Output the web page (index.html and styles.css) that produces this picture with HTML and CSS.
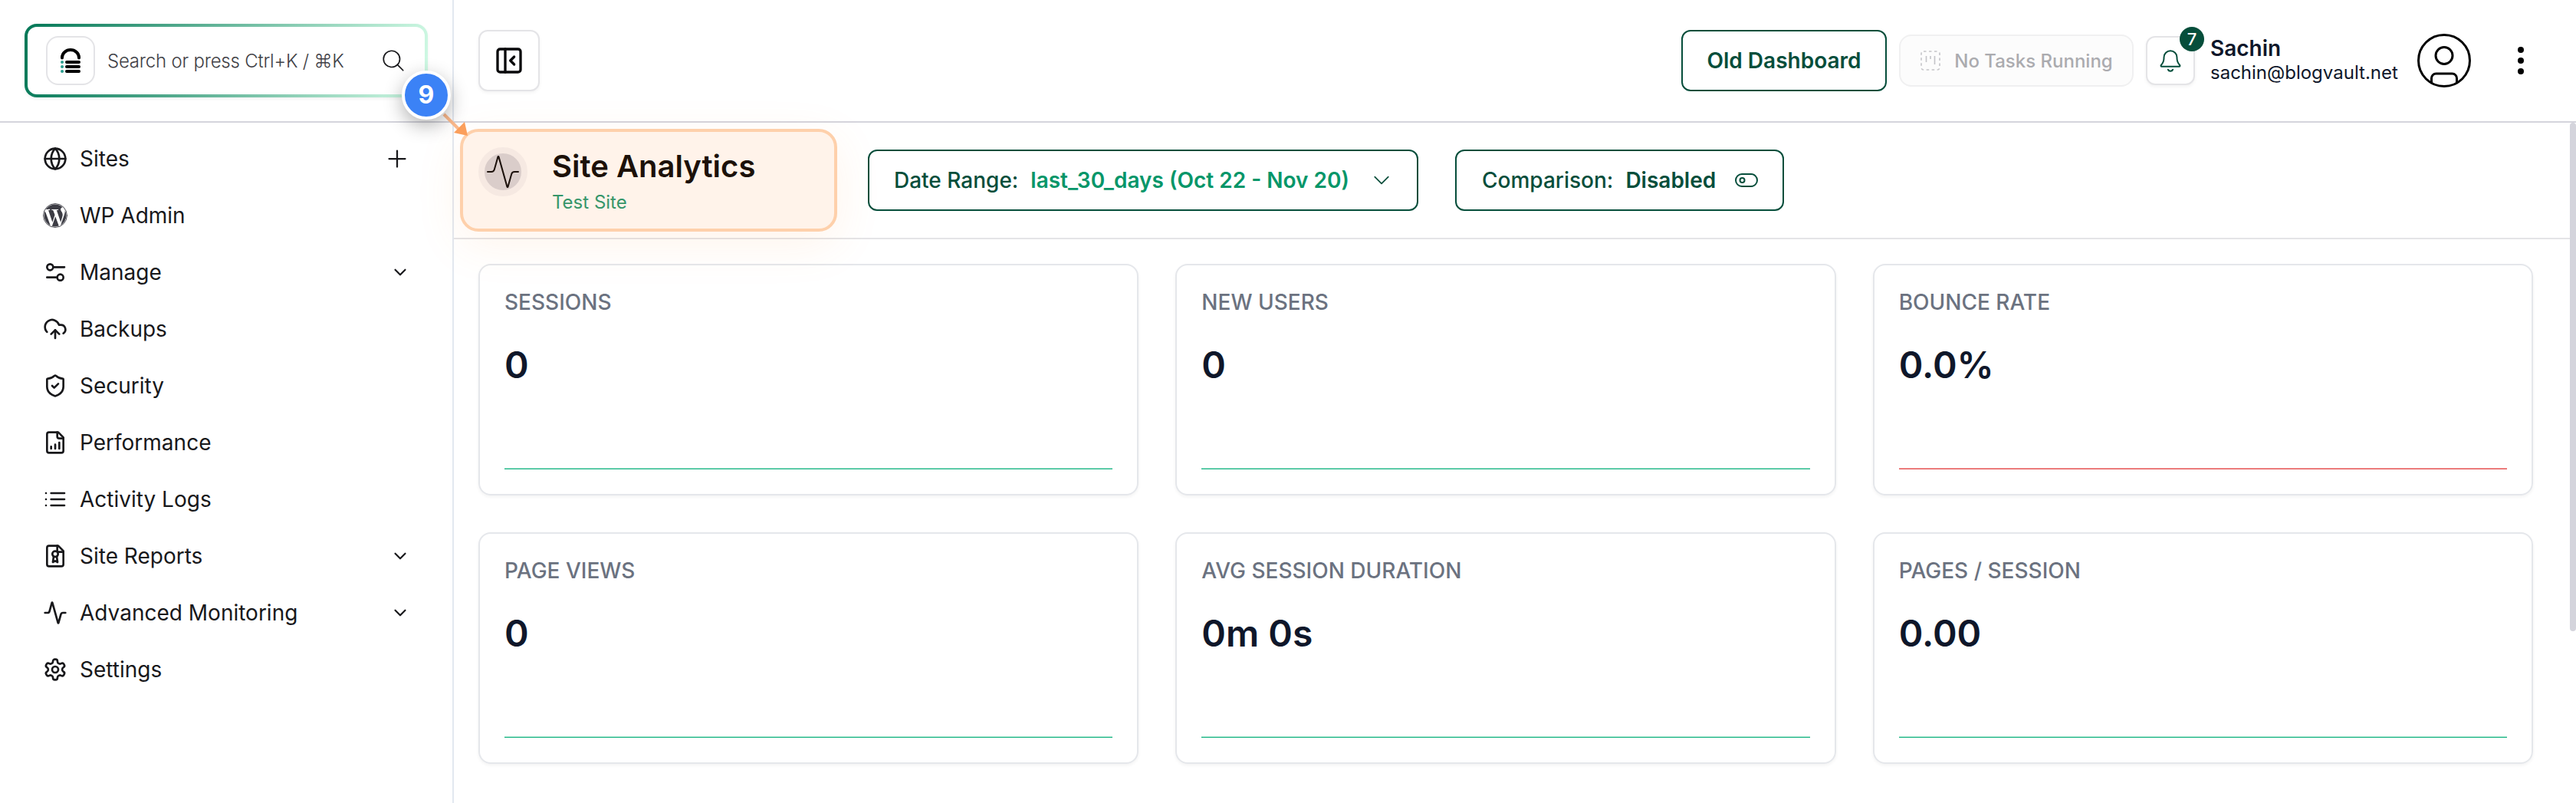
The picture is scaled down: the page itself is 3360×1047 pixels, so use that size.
FILE: index.html
```html
<!DOCTYPE html>
<html lang="en">
<head>
    <meta charset="UTF-8">
    <meta name="viewport" content="width=device-width, initial-scale=1.0">
    <title>Site Analytics</title>
    <link rel="stylesheet" href="styles.css">
</head>
<body>
<div class="app">
    <aside class="sidebar">
        <div class="search-area">
            <div class="search">
                <span class="logo">
                    <svg width="26" height="32" viewBox="0 0 26 32">
                        <path d="M2 12.500V12a11 10 0 0 1 22 0v.5" stroke="#000" stroke-width="4"/>
                        <path d="M8 18h16M8 24h16M8 30h16" stroke="#000" stroke-width="4"/>
                        <path d="M2 18h.1M2 24h.1M2 30h.1" stroke="#2a9d8f" stroke-width="4"/>
                    </svg>
                </span>
                <span class="search-text">Search or press Ctrl+K / ⌘K</span>
                <svg class="search-icon" viewBox="0 0 24 24"><circle cx="10.500" cy="10.500" r="7.500"/><path d="m21 21-5.200-5.200"/></svg>
            </div>
        </div>
        <nav class="menu">
            <a class="item">
                <svg class="icon" viewBox="0 0 24 24"><circle cx="12" cy="12" r="10"/><path d="M12 2a14.500 14.500 0 0 0 0 20 14.500 14.500 0 0 0 0-20M2 12h20"/></svg>
                <span>Sites</span>
                <svg class="plus" viewBox="0 0 24 24"><path d="M5 12h14M12 5v14"/></svg>
            </a>
            <a class="item">
                <svg class="icon wp" viewBox="0 0 24 24"><circle cx="12" cy="12" r="11.600"/><path d="M21.469 6.825c.84 1.537 1.318 3.300 1.318 5.175 0 3.979-2.156 7.456-5.363 9.325l3.295-9.527c.615-1.540.82-2.771.82-3.864 0-.405-.026-.78-.07-1.110m-7.981.105c.647-.03 1.232-.105 1.232-.105.582-.075.514-.93-.067-.899 0 0-1.755.135-2.880.135-1.064 0-2.850-.15-2.850-.15-.585-.03-.661.855-.075.885 0 0 .54.061 1.125.09l1.680 4.605-2.370 7.080L5.354 6.900c.649-.03 1.234-.1 1.234-.1.585-.075.516-.93-.065-.896 0 0-1.746.138-2.874.138-.2 0-.438-.008-.69-.015C4.911 3.150 8.235 1.215 12 1.215c2.809 0 5.365 1.072 7.286 2.833-.046-.003-.091-.009-.141-.009-1.060 0-1.812.923-1.812 1.914 0 .89.513 1.643 1.060 2.531.411.72.89 1.643.89 2.977 0 .915-.354 1.994-.821 3.479l-1.075 3.585-3.900-11.610.001.014zM12 22.784c-1.059 0-2.081-.153-3.048-.437l3.237-9.406 3.315 9.087c.024.053.05.101.078.149-1.120.393-2.325.609-3.582.609M1.211 12c0-1.564.336-3.050.935-4.390L7.290 21.709C3.694 19.960 1.212 16.271 1.211 12"/></svg>
                <span>WP Admin</span>
            </a>
            <a class="item">
                <svg class="icon" viewBox="0 0 24 24"><circle cx="7" cy="7" r="3"/><path d="M10 7h11M4 17h10"/><circle cx="17" cy="17" r="3"/></svg>
                <span>Manage</span>
                <svg class="chevron" viewBox="0 0 24 24"><path d="m6 9 6 6 6-6"/></svg>
            </a>
            <a class="item">
                <svg class="icon" viewBox="0 0 24 24"><path d="M12 13v8"/><path d="M4 14.899A7 7 0 1 1 15.710 8h1.790a4.500 4.500 0 0 1 2.500 8.242"/><path d="m8 17 4-4 4 4"/></svg>
                <span>Backups</span>
            </a>
            <a class="item">
                <svg class="icon" viewBox="0 0 24 24"><path d="M20 13c0 5-3.500 7.500-7.660 8.950a1 1 0 0 1-.67-.01C7.500 20.500 4 18 4 13V6a1 1 0 0 1 1-1c2 0 4.500-1.200 6.240-2.720a1.170 1.170 0 0 1 1.520 0C14.510 3.810 17 5 19 5a1 1 0 0 1 1 1z"/><path d="m9 12 2 2 4-4"/></svg>
                <span>Security</span>
            </a>
            <a class="item">
                <svg class="icon" viewBox="0 0 24 24"><path d="M15 2H6a2 2 0 0 0-2 2v16a2 2 0 0 0 2 2h12a2 2 0 0 0 2-2V7Z"/><path d="M14 2v4a2 2 0 0 0 2 2h4M8 18v-2M12 18v-4M16 18v-6"/></svg>
                <span>Performance</span>
            </a>
            <a class="item">
                <svg class="icon" viewBox="0 0 24 24"><path d="M3 6h.01M3 12h.01M3 18h.01M8 6h13M8 12h13M8 18h13"/></svg>
                <span>Activity Logs</span>
            </a>
            <a class="item">
                <svg class="icon" viewBox="0 0 24 24"><path d="M15 2H6a2 2 0 0 0-2 2v16a2 2 0 0 0 2 2h12a2 2 0 0 0 2-2V7Z"/><path d="M14 2v5a1 1 0 0 0 1 1h5"/><circle cx="12" cy="10" r="2.800"/><path d="m10.500 12.500-.8 5.500 2.300-1.200 2.300 1.200-.8-5.500"/></svg>
                <span>Site Reports</span>
                <svg class="chevron" viewBox="0 0 24 24"><path d="m6 9 6 6 6-6"/></svg>
            </a>
            <a class="item">
                <svg class="icon" viewBox="0 0 24 24"><path d="M22 12h-2.480a2 2 0 0 0-1.930 1.460l-2.350 8.360a.25.25 0 0 1-.48 0L9.240 2.180a.25.25 0 0 0-.48 0l-2.350 8.360A2 2 0 0 1 4.490 12H2"/></svg>
                <span>Advanced Monitoring</span>
                <svg class="chevron" viewBox="0 0 24 24"><path d="m6 9 6 6 6-6"/></svg>
            </a>
            <a class="item">
                <svg class="icon" viewBox="0 0 24 24"><path d="M12.220 2h-.44a2 2 0 0 0-2 2v.18a2 2 0 0 1-1 1.730l-.43.25a2 2 0 0 1-2 0l-.15-.08a2 2 0 0 0-2.730.73l-.22.38a2 2 0 0 0 .73 2.730l.15.1a2 2 0 0 1 1 1.720v.51a2 2 0 0 1-1 1.740l-.15.09a2 2 0 0 0-.73 2.730l.22.38a2 2 0 0 0 2.730.73l.15-.08a2 2 0 0 1 2 0l.43.25a2 2 0 0 1 1 1.730V20a2 2 0 0 0 2 2h.44a2 2 0 0 0 2-2v-.18a2 2 0 0 1 1-1.730l.43-.25a2 2 0 0 1 2 0l.15.08a2 2 0 0 0 2.730-.73l.22-.39a2 2 0 0 0-.73-2.730l-.15-.08a2 2 0 0 1-1-1.740v-.5a2 2 0 0 1 1-1.740l.15-.09a2 2 0 0 0 .73-2.730l-.22-.38a2 2 0 0 0-2.730-.73l-.15.08a2 2 0 0 1-2 0l-.43-.25a2 2 0 0 1-1-1.730V4a2 2 0 0 0-2-2z"/><circle cx="12" cy="12" r="3"/></svg>
                <span>Settings</span>
            </a>
        </nav>
    </aside>

    <main class="main">
        <header class="topbar">
            <button class="square toggle">
                <svg viewBox="0 0 24 24"><rect x="3" y="3" width="18" height="18" rx="2"/><path d="M9 3v18M16 15l-3-3 3-3"/></svg>
            </button>
            <div class="topbar-right">
                <button class="btn old">Old Dashboard</button>
                <button class="tasks">
                    <svg viewBox="0 0 28 28"><rect x="2" y="2" width="24" height="24" rx="3" stroke-dasharray="3.500 3.500"/><path d="M8.500 8v8M14 8v4M19.500 8v11"/></svg>
                    No Tasks Running
                </button>
                <button class="square bell">
                    <svg viewBox="0 0 24 24"><path d="M12 3a6 6 0 0 0-6 6v.75c0 2.600-.9 4.600-2.500 6.300-.6.700-.3 1.450.5 1.450h16c.8 0 1.100-.75.500-1.450-1.600-1.700-2.500-3.700-2.500-6.300V9a6 6 0 0 0-6-6z"/><path d="M9.800 20.300a2.400 2.400 0 0 0 4.400 0"/></svg>
                    <span class="count">7</span>
                </button>
                <div class="user">
                    <strong>Sachin</strong>
                    <span>sachin@blogvault.net</span>
                </div>
                <svg class="avatar" viewBox="0 0 70 70"><circle cx="35" cy="35" r="33.500"/><circle cx="35" cy="28.500" r="11"/><path d="M18.500 64V58a6 6 0 0 1 6-6h21a6 6 0 0 1 6 6v6"/></svg>
                <svg class="dots" viewBox="0 0 8 36"><circle cx="4" cy="4" r="4"/><circle cx="4" cy="18" r="4"/><circle cx="4" cy="32" r="4"/></svg>
            </div>
        </header>

        <section class="page-head">
            <div class="page-title">
                <span class="pulse">
                    <svg viewBox="0 0 24 24"><path d="M22 12h-2.480a2 2 0 0 0-1.930 1.460l-2.350 8.360a.25.25 0 0 1-.48 0L9.240 2.180a.25.25 0 0 0-.48 0l-2.350 8.360A2 2 0 0 1 4.490 12H2"/></svg>
                </span>
                <div>
                    <h1>Site Analytics</h1>
                    <p>Test Site</p>
                </div>
            </div>
            <button class="btn date">
                Date Range: <b>last_30_days (Oct 22 - Nov 20)</b>
                <svg viewBox="0 0 24 24"><path d="m4.500 8.250 7.500 7.500 7.500-7.500"/></svg>
            </button>
            <button class="btn compare">
                Comparison: <b>Disabled</b>
                <svg viewBox="0 0 30 20"><rect x="1" y="2" width="28" height="16" rx="8"/><circle cx="9.500" cy="10" r="3"/></svg>
            </button>
        </section>

        <section class="cards">
            <div class="card"><h2>SESSIONS</h2><p>0</p><div class="line"></div></div>
            <div class="card"><h2>NEW USERS</h2><p>0</p><div class="line"></div></div>
            <div class="card"><h2>BOUNCE RATE</h2><p>0.0%</p><div class="line red"></div></div>
            <div class="card"><h2>PAGE VIEWS</h2><p>0</p><div class="line"></div></div>
            <div class="card"><h2>AVG SESSION DURATION</h2><p>0m 0s</p><div class="line"></div></div>
            <div class="card"><h2>PAGES / SESSION</h2><p>0.00</p><div class="line"></div></div>
        </section>
        <div class="scrollbar"></div>
    </main>

    <!-- step marker pointing at the page title -->
    <div class="highlight"></div>
    <svg class="arrow" viewBox="0 0 40 40">
        <path d="M5 6 26 27" stroke="#fdba8c" stroke-width="4"/>
        <path d="M32 16 18 30l18 4z" fill="#fb9f5c"/>
    </svg>
    <div class="step">9</div>
</div>
</body>
</html>
```
FILE: styles.css
```css
* {
    box-sizing: border-box;
}
body {
    margin: 0;
    background: #fff;
    font-family: Inter, "Liberation Sans", sans-serif;
    font-optical-sizing: none;
    font-size: 28px;
    color: #18181b;
}
h1, h2, p {
    margin: 0;
}
button {
    font: inherit;
    padding: 0;
    background: #fff;
    white-space: nowrap;
}
svg {
    fill: none;
    stroke: currentColor;
    stroke-width: 2;
    stroke-linecap: round;
    stroke-linejoin: round;
    flex-shrink: 0;
}
.app {
    position: relative;
    display: flex;
    width: 3360px;
    height: 1047px;
    overflow: hidden;
}

/* sidebar */
.sidebar {
    width: 592px;
    border-right: 2px solid #e2e8f0;
}
.search-area {
    height: 160px;
    padding: 31px 32px;
    border-bottom: 2px solid #d4d4dc;
}
.search {
    display: flex;
    align-items: center;
    width: 526px;
    height: 96px;
    padding: 0 24px;
    border: 4px solid transparent;
    border-radius: 16px;
    background: linear-gradient(#fff, #fff) padding-box, linear-gradient(100deg, #047857, #d1fae5) border-box;
    box-shadow: 0 2px 4px rgba(0, 0, 0, 0.06);
}
.logo {
    display: flex;
    align-items: center;
    justify-content: center;
    width: 64px;
    height: 64px;
    border: 2px solid #e4e4e7;
    border-radius: 16px;
}
.search-text {
    margin-left: 16px;
    font-size: 24px;
    font-weight: 300;
    letter-spacing: -0.22px;
    color: #3f3f46;
    white-space: nowrap;
}
.search-icon {
    width: 34px;
    height: 34px;
    margin-left: auto;
    stroke-width: 1.2;
}
.menu {
    padding: 10px 50px 0 56px;
}
.item {
    display: flex;
    align-items: center;
    height: 74px;
    gap: 16px;
}
.icon {
    width: 32px;
    height: 32px;
}
.icon.wp {
    stroke: none;
}
.icon.wp path {
    fill: #3c3c44;
}
.icon.wp circle {
    stroke: #3c3c44;
    stroke-width: 0.7;
}
.plus {
    width: 36px;
    height: 36px;
    margin-left: auto;
    margin-right: 4px;
    stroke-width: 1.5;
}
.chevron {
    width: 26px;
    height: 26px;
    margin-left: auto;
    margin-right: 5px;
}

/* top bar */
.main {
    position: relative;
    flex: 1;
}
.topbar {
    display: flex;
    align-items: center;
    justify-content: space-between;
    height: 160px;
    padding: 0 68px 0 32px;
    border-bottom: 2px solid #d4d4dc;
}
.square {
    position: relative;
    display: flex;
    align-items: center;
    justify-content: center;
    border: 2px solid #e4e4e7;
    border-radius: 12px;
    box-shadow: 0 2px 4px rgba(0, 0, 0, 0.05);
}
.toggle {
    width: 80px;
    height: 80px;
    color: #09090b;
}
.toggle svg {
    width: 40px;
    height: 40px;
}
.topbar-right {
    display: flex;
    align-items: center;
}
.btn {
    display: flex;
    align-items: center;
    height: 80px;
    padding: 0 32px;
    border: 2px solid #064e3b;
    border-radius: 12px;
    color: #064e3b;
    font-weight: 500;
}
.btn b {
    margin-left: 16px;
    font-weight: 600;
}
.old {
    width: 268px;
    justify-content: center;
    padding: 0;
    font-weight: 600;
}
.tasks {
    display: flex;
    align-items: center;
    justify-content: center;
    width: 306px;
    height: 68px;
    margin: 0 16px;
    gap: 17px;
    border: 2px solid #f0f0f1;
    border-radius: 16px;
    background: #fcfcfc;
    color: #ababaf;
    font-size: 24px;
    font-weight: 500;
}
.tasks svg {
    width: 28px;
    height: 28px;
    stroke-width: 1.6;
    stroke-linecap: butt;
    color: #c4c4c8;
}
.bell {
    width: 64px;
    height: 64px;
    color: #064e3b;
}
.bell svg {
    width: 34px;
    height: 34px;
    stroke-width: 1.4;
}
.count {
    position: absolute;
    top: -14px;
    right: -14px;
    width: 32px;
    height: 32px;
    border-radius: 50%;
    background: #064e3b;
    color: #fff;
    font-size: 22px;
    font-weight: 500;
    line-height: 32px;
    text-align: center;
}
.user {
    display: flex;
    flex-direction: column;
    width: 270px;
    margin-left: 20px;
    color: #0f172a;
    font-size: 24px;
    line-height: 32px;
}
.user strong {
    font-size: 28px;
    font-weight: 600;
    line-height: 32px;
}
.avatar {
    width: 70px;
    height: 70px;
    stroke-width: 3;
    color: #000;
}
.dots {
    width: 8px;
    height: 36px;
    margin-left: 61px;
    fill: #000;
    stroke: none;
}

/* page head */
.page-head {
    display: flex;
    align-items: center;
    height: 152px;
    padding-left: 32px;
    border-bottom: 2px solid #e4e4e7;
}
.page-title {
    position: relative;
    z-index: 1;
    display: flex;
    width: 508px;
    height: 86px;
    gap: 32px;
}
.pulse {
    display: flex;
    align-items: center;
    justify-content: center;
    width: 64px;
    height: 64px;
    border: 8px solid #f6e9e2;
    border-radius: 50%;
    background: #dacdca;
    color: #1c110b;
}
.pulse svg {
    width: 48px;
    height: 48px;
    stroke-width: 1;
}
h1 {
    font-size: 40px;
    font-weight: 600;
    line-height: 50px;
    color: #1c1109;
}
.page-title p {
    margin-top: 6px;
    font-size: 24px;
    line-height: 32px;
    color: #36966a;
}
.date {
    width: 718px;
}
.date b {
    color: #059669;
}
.date svg {
    width: 28px;
    height: 28px;
    margin-left: auto;
    stroke-width: 1.5;
}
.compare {
    width: 429px;
    margin-left: 48px;
    padding-left: 33px;
}
.compare svg {
    width: 30px;
    height: 20px;
    margin-left: auto;
}

/* cards */
.cards {
    display: grid;
    grid-template-columns: repeat(3, 1fr);
    gap: 48px;
    padding: 32px 56px 0 32px;
}
.card {
    height: 302px;
    padding: 28px 32px;
    border: 2px solid #e5e7eb;
    border-radius: 16px;
    box-shadow: 0 2px 4px rgba(0, 0, 0, 0.05);
}
.card h2 {
    font-size: 28px;
    font-weight: 500;
    line-height: 40px;
    color: #6b7280;
}
.card p {
    margin-top: 34px;
    font-size: 48px;
    font-weight: 600;
    line-height: 56px;
    color: #0f172a;
}
.line {
    height: 2px;
    margin-top: 106px;
    border-top: 1px solid #9fe3cb;
    background: #1fb486;
}
.line.red {
    border-color: #f7a8a8;
    background: #e05252;
}
.scrollbar {
    position: absolute;
    top: 160px;
    right: 0;
    width: 8px;
    height: 663px;
    border-radius: 4px;
    background: #d4d4dc;
}

/* step marker */
.highlight {
    position: absolute;
    left: 600px;
    top: 168px;
    width: 492px;
    height: 134px;
    border: 4px solid #fed0ab;
    border-radius: 24px;
    background: #fff3ea;
    box-shadow: 0 16px 60px rgba(251, 146, 60, 0.1);
}
.arrow {
    position: absolute;
    left: 574px;
    top: 143px;
    width: 40px;
    height: 40px;
    stroke: none;
    stroke-linecap: butt;
}
.step {
    position: absolute;
    left: 524px;
    top: 92px;
    width: 64px;
    height: 64px;
    border: 4px solid #fff;
    border-radius: 50%;
    background: #3b82f6;
    box-shadow: 0 8px 24px rgba(0, 0, 0, 0.3);
    color: #fff;
    font-size: 32px;
    font-weight: 700;
    line-height: 56px;
    text-align: center;
}
```
